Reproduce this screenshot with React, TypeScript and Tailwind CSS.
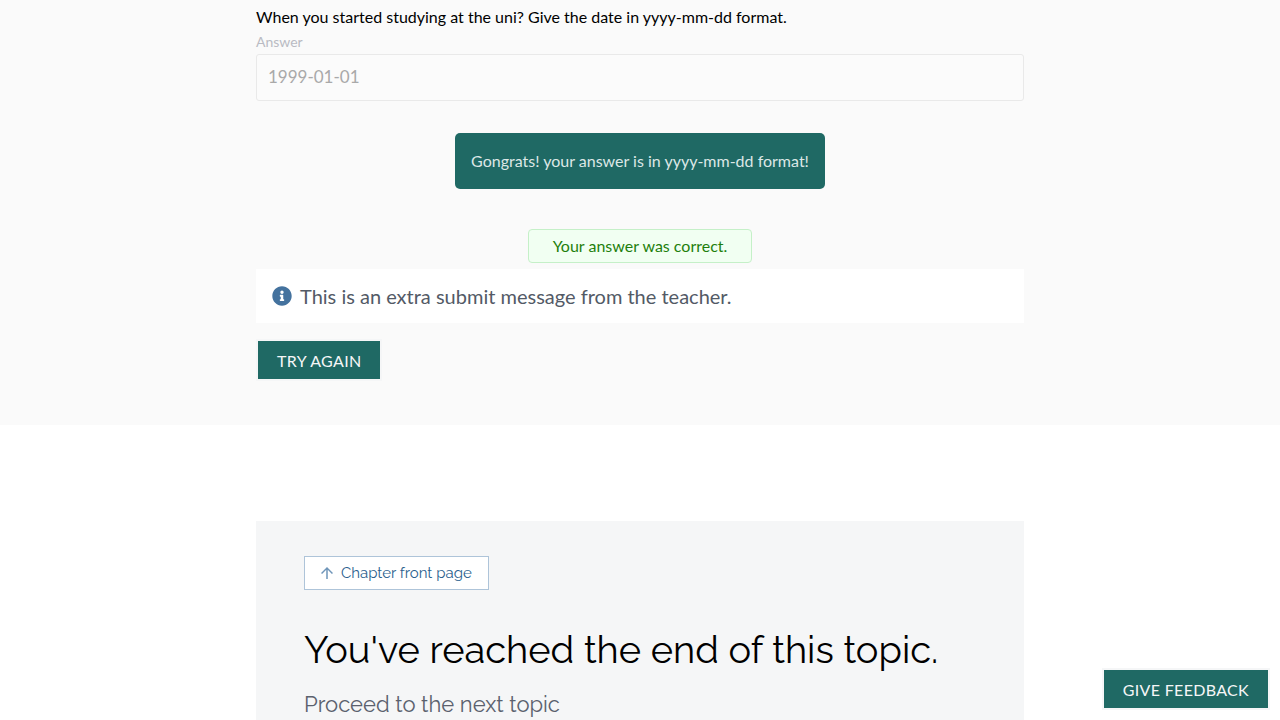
import { FaInfoCircle } from "react-icons/fa";
import { MdArrowUpward } from "react-icons/md";

function Exercise() {
  return (
    <section className="bg-[#fafafa] pb-11">
      <div className="mx-auto w-3/5">
        <p className="pt-1 text-base leading-[26px] text-black">
          When you started studying at the uni? Give the date in yyyy-mm-dd format.
        </p>
        <label htmlFor="answer" className="block text-sm leading-6 text-[#b9bbc3]">
          Answer
        </label>
        <input
          id="answer"
          type="text"
          disabled
          defaultValue="1999-01-01"
          className="block h-[47px] w-full rounded-[3px] border border-[#e9e9e9] bg-[#fbfbfb] px-[11px] pb-0.5 text-[17px] text-[#a9a9a9]"
        />
        <div className="mt-8 flex justify-center">
          <p className="rounded-[5px] bg-[#1f6964] p-4 text-base text-[#dce7e6]">
            Gongrats! your answer is in yyyy-mm-dd format!
          </p>
        </div>
        <div className="mt-10 flex justify-center">
          <p className="rounded-[4px] border border-[#c5f0c8] bg-[#f1fff2] px-6 py-1 text-base text-[#1f7f0d]">
            Your answer was correct.
          </p>
        </div>
        <div className="mt-1.5 flex items-center gap-2 bg-white px-4 py-3 text-xl leading-[30px] text-[#535a66]">
          <FaInfoCircle className="size-5 text-[#44729e]" aria-hidden="true" />
          <p>This is an extra submit message from the teacher.</p>
        </div>
        <button
          type="button"
          className="mt-4 block h-[42px] border-2 border-[#f5f6f7] bg-[#1f6964] px-[19px] pt-0.5 text-base uppercase tracking-[0.02em] text-[#f5f6f7]"
        >
          Try again
        </button>
      </div>
    </section>
  );
}

function EndOfTopic() {
  return (
    <section className="mx-auto mt-24 w-3/5 grow bg-[#f5f6f7] px-12 pt-[35px] font-[Raleway,'Open_Sans',sans-serif]">
      <a
        href="#chapter"
        className="inline-flex h-[34px] items-center gap-[5px] border border-[#aec4d9] bg-white pr-4 pl-[13px] text-[15px] text-[#2b5f8e]"
      >
        <MdArrowUpward className="size-[18px] text-[#6f95b9]" aria-hidden="true" />
        Chapter front page
      </a>
      <h2 className="mt-9 text-[38px] leading-[48px] font-normal text-black">
        You've reached the end of this topic.
      </h2>
      <p className="mt-3.5 text-[22px] leading-8 text-[#5b616e]">Proceed to the next topic</p>
    </section>
  );
}

export default function App() {
  return (
    <div className="flex min-h-screen flex-col bg-white font-[Lato,sans-serif]">
      <Exercise />
      <EndOfTopic />
      <button
        type="button"
        className="fixed right-2.5 bottom-2.5 h-[42px] border-2 border-[#f5f6f7] bg-[#1f6964] px-[19px] pt-0.5 text-base uppercase tracking-[0.02em] text-[#f5f6f7]"
      >
        Give feedback
      </button>
    </div>
  );
}
